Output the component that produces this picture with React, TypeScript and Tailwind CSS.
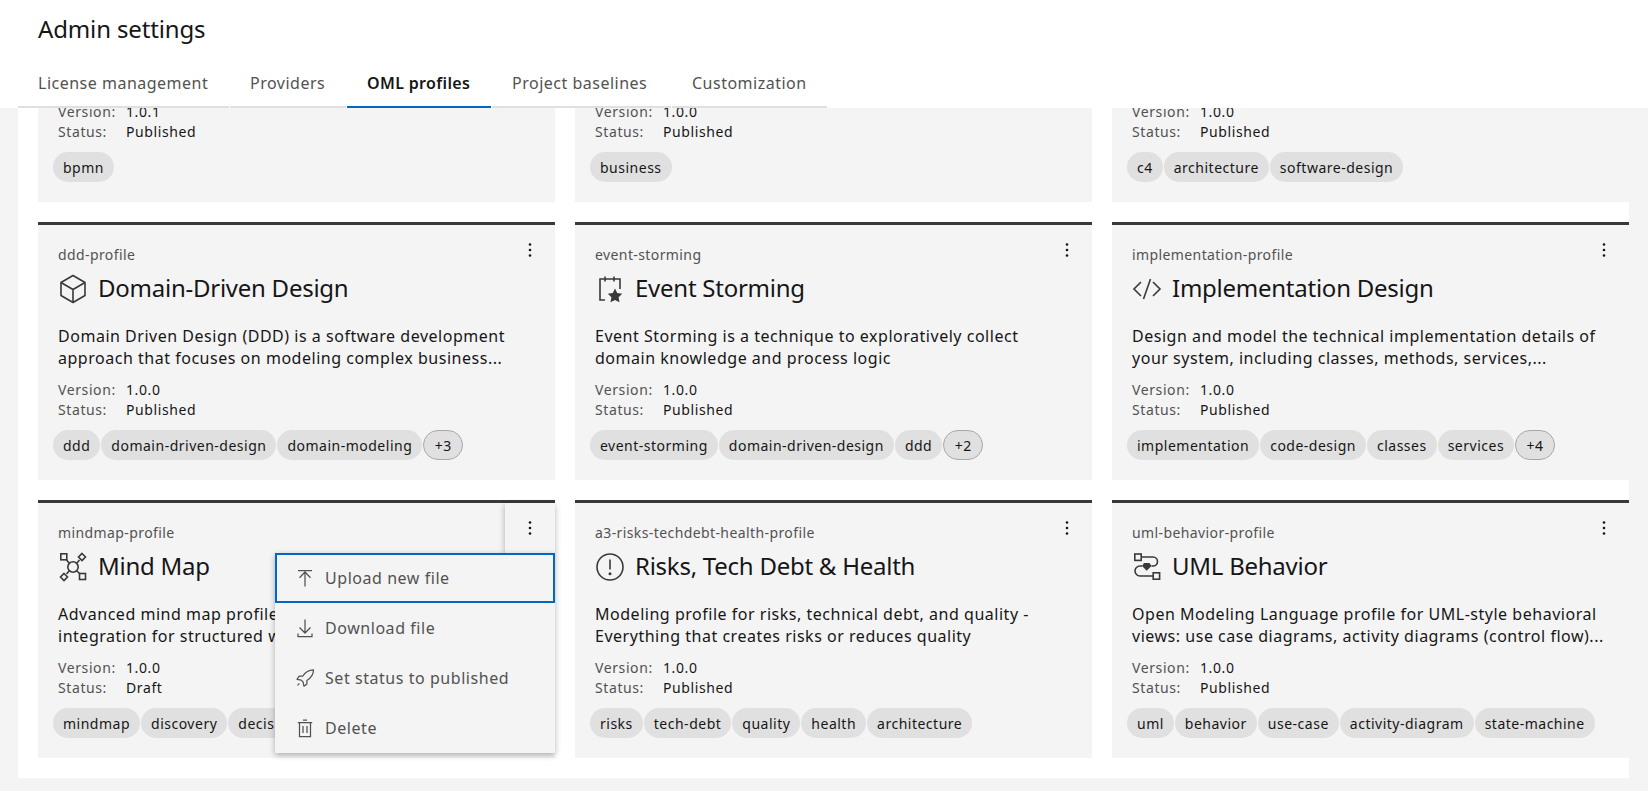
import type { ReactNode } from "react";

const FONT = "font-['Noto_Sans',sans-serif]";

function Glyph({ children, className = "" }: { children: ReactNode; className?: string }) {
  return (
    <svg viewBox="0 0 30 30" fill="none" stroke="#393939" strokeWidth={1.6} className={`w-[30px] h-[30px] shrink-0 mt-[2px] ${className}`}>
      {children}
    </svg>
  );
}

const CubeIcon = () => (
  <Glyph>
    <path d="M15 1.5 27 8.5V21.5L15 28.5 3 21.5V8.5Z" strokeLinejoin="round" />
    <path d="M3 8.5 15 15.5 27 8.5M15 15.5V28.5" />
  </Glyph>
);

const EventIcon = () => (
  <Glyph>
    <path d="M10 26H5V5H25V15" />
    <path d="M10 2.5V7.5M19 2.5V7.5" />
    <path d="M20 14.5l2.2 4.6 5 .7-3.6 3.5.9 5-4.5-2.4-4.5 2.4.9-5-3.6-3.5 5-.7Z" fill="#393939" stroke="none" />
  </Glyph>
);

const CodeIcon = () => (
  <Glyph>
    <path d="M9 8 2 15l7 7M21 8l7 7-7 7M18.5 5 11.5 25" />
  </Glyph>
);

const MindMapIcon = () => (
  <Glyph>
    <rect x="2.8" y="1.8" width="6" height="6" />
    <rect x="21.5" y="21.5" width="6" height="6" />
    <path d="M24 1.5 27.5 5 24 8.5 20.500 5Z" />
    <path d="M6 21.5 9.500 25 6 28.500 2.500 25Z" />
    <circle cx="15" cy="15" r="5.200" />
    <path d="M8.500 8 11.300 11.300M21.500 8 18.700 11.300M8.500 22 11.300 18.700M21.500 21.500 18.700 18.700" />
  </Glyph>
);

const AlertIcon = () => (
  <Glyph>
    <circle cx="15" cy="15" r="13" />
    <path d="M15 7.500V17.500" />
    <circle cx="15" cy="21.800" r="1.500" fill="#393939" stroke="none" />
  </Glyph>
);

const BehaviorIcon = () => (
  <Glyph>
    <rect x="2.800" y="2" width="6.400" height="6.400" />
    <rect x="21.200" y="20.800" width="6.400" height="6.400" />
    <path d="M9.500 5H21a4.500 4.500 0 0 1 0 9h-1.500M10 14H8a5 5 0 0 0 0 10H21" />
    <path d="M14.700 18.800 10 14l2-3h5.500l2 3Z" fill="#393939" stroke="none" />
  </Glyph>
);

function Kebab() {
  return (
    <svg viewBox="0 0 16 16" className="w-4 h-4" fill="#161616">
      <circle cx="8" cy="2.500" r="1.300" />
      <circle cx="8" cy="8" r="1.300" />
      <circle cx="8" cy="13.500" r="1.300" />
    </svg>
  );
}

function MenuGlyph({ children }: { children: ReactNode }) {
  return (
    <svg viewBox="0 0 20 20" fill="none" stroke="#525252" strokeWidth={1.250} className="w-5 h-5 shrink-0">
      {children}
    </svg>
  );
}

const menuItems: { label: string; focused?: boolean; icon: ReactNode }[] = [
  {
    label: "Upload new file",
    focused: true,
    icon: <path d="M3 2.500H17M10 18.500V4M4.500 9.800 10 4l5.500 5.800" />,
  },
  {
    label: "Download file",
    icon: <path d="M10 1.500V15M4.500 9.500 10 15l5.500-5.500M3 15.500V18.500H17V15.500" />,
  },
  {
    label: "Set status to published",
    icon: <path d="M18.500 1.800c-4.800 0-8.400 2.400-10.800 6.400H4.200L2 11.300l4.200.8 1.900 1.900.8 4.200 3-2.300v-3.400c3.900-2.400 6.600-5.900 6.600-10.700ZM4.300 15.400 2.500 17.400" strokeLinejoin="round" />,
  },
  {
    label: "Delete",
    icon: <path d="M8 2H12M2.800 4.500H17.200M4.500 4.500V18.500H15.500V4.500M8 8V15M12 8V15" />,
  },
];

function ActionsMenu() {
  return (
    <>
      <div className="absolute top-0 right-0 w-[50px] h-[50px] bg-[#f4f4f4] flex items-center justify-center shadow-[0_2px_6px_rgba(0,0,0,0.3)] z-10">
        <Kebab />
      </div>
      <div className="absolute top-[50px] right-0 w-[280px] bg-[#f4f4f4] shadow-[0_2px_6px_rgba(0,0,0,0.3)] z-20">
        {menuItems.map((item) => (
          <div
            key={item.label}
            className={`h-[50px] flex items-center gap-[10px] pl-5 text-[16px] tracking-[0.55px] text-[#525252] ${item.focused ? "outline-2 -outline-offset-2 outline-[#0067c5]" : ""}`}
          >
            <MenuGlyph>{item.icon}</MenuGlyph>
            {item.label}
          </div>
        ))}
      </div>
    </>
  );
}

function Meta({ version, status }: { version: string; status: string }) {
  return (
    <div className="pl-5 text-[14px] leading-5 tracking-[0.6px]">
      <div className="flex">
        <span className="w-[68px] text-[#525252]">Version:</span>
        <span className="text-[#161616]">{version}</span>
      </div>
      <div className="flex">
        <span className="w-[68px] text-[#525252]">Status:</span>
        <span className="text-[#161616]">{status}</span>
      </div>
    </div>
  );
}

function Tags({ tags, more }: { tags: string[]; more?: number }) {
  return (
    <div className="flex gap-px pl-[15px] mt-[10px] text-[14px] tracking-[0.5px] text-[#161616]">
      {tags.map((t) => (
        <span key={t} className="h-[30px] px-[10px] rounded-full bg-[#e0e0e0] flex items-center whitespace-nowrap">
          {t}
        </span>
      ))}
      {more ? (
        <span className="h-[30px] w-10 rounded-full bg-[#e0e0e0] border border-[#a8a8a8] flex items-center justify-center">
          +{more}
        </span>
      ) : null}
    </div>
  );
}

type Profile = {
  id: string;
  title: string;
  icon: ReactNode;
  desc: string[];
  status?: string;
  tags: string[];
  more?: number;
  open?: boolean;
};

function ProfileCard({ p }: { p: Profile }) {
  return (
    <div className="relative h-[258px] bg-[#f4f4f4] border-t-[3px] border-[#393939]">
      {p.open ? (
        <ActionsMenu />
      ) : (
        <div className="absolute top-0 right-0 w-[50px] h-[50px] flex items-center justify-center">
          <Kebab />
        </div>
      )}
      <div className="pl-5 pt-[21px] text-[14px] leading-[18px] tracking-[0.4px] text-[#525252]">{p.id}</div>
      <div className="flex items-center gap-[10px] pl-5 mt-[9px] h-[30px]">
        {p.icon}
        <span className="text-[24px] tracking-[-0.25px] text-[#161616] whitespace-nowrap">{p.title}</span>
      </div>
      <div className="pl-5 mt-[22px] text-[16px] leading-[22px] tracking-[0.52px] text-[#161616]">
        {p.desc.map((line) => (
          <div key={line} className="whitespace-nowrap">
            {line}
          </div>
        ))}
      </div>
      <div className="mt-[11px]">
        <Meta version="1.0.0" status={p.status ?? "Published"} />
      </div>
      <Tags tags={p.tags} more={p.more} />
    </div>
  );
}

const clippedRow = [
  { version: "1.0.1", tags: ["bpmn"] },
  { version: "1.0.0", tags: ["business"] },
  { version: "1.0.0", tags: ["c4", "architecture", "software-design"] },
];

const profiles: Profile[] = [
  {
    id: "ddd-profile",
    title: "Domain-Driven Design",
    icon: <CubeIcon />,
    desc: ["Domain Driven Design (DDD) is a software development", "approach that focuses on modeling complex business..."],
    tags: ["ddd", "domain-driven-design", "domain-modeling"],
    more: 3,
  },
  {
    id: "event-storming",
    title: "Event Storming",
    icon: <EventIcon />,
    desc: ["Event Storming is a technique to exploratively collect", "domain knowledge and process logic"],
    tags: ["event-storming", "domain-driven-design", "ddd"],
    more: 2,
  },
  {
    id: "implementation-profile",
    title: "Implementation Design",
    icon: <CodeIcon />,
    desc: ["Design and model the technical implementation details of", "your system, including classes, methods, services,..."],
    tags: ["implementation", "code-design", "classes", "services"],
    more: 4,
  },
  {
    id: "mindmap-profile",
    title: "Mind Map",
    icon: <MindMapIcon />,
    desc: ["Advanced mind map profile", "integration for structured w"],
    status: "Draft",
    tags: ["mindmap", "discovery", "decision-making"],
    open: true,
  },
  {
    id: "a3-risks-techdebt-health-profile",
    title: "Risks, Tech Debt & Health",
    icon: <AlertIcon />,
    desc: ["Modeling profile for risks, technical debt, and quality -", "Everything that creates risks or reduces quality"],
    tags: ["risks", "tech-debt", "quality", "health", "architecture"],
  },
  {
    id: "uml-behavior-profile",
    title: "UML Behavior",
    icon: <BehaviorIcon />,
    desc: ["Open Modeling Language profile for UML-style behavioral", "views: use case diagrams, activity diagrams (control flow)..."],
    tags: ["uml", "behavior", "use-case", "activity-diagram", "state-machine"],
  },
];

const tabs = [
  { label: "License management", width: "w-[211px]" },
  { label: "Providers", width: "w-[116px]" },
  { label: "OML profiles", width: "w-[144px]", active: true },
  { label: "Project baselines", width: "w-[179px]" },
  { label: "Customization", width: "w-[155px]" },
];

export default function App() {
  return (
    <div className={`h-screen overflow-hidden bg-[#f4f4f4] ${FONT}`}>
      <header className="h-[108px] bg-white">
        <h1 className="h-[60px] pl-[38px] pt-[12px] text-[24px] leading-[34px] tracking-[-0.15px] text-[#161616]">Admin settings</h1>
        <nav className="flex gap-px pl-[18px]">
          {tabs.map((t) => (
            <div
              key={t.label}
              className={`${t.width} h-[48px] pl-5 flex items-center border-b-2 text-[16px] whitespace-nowrap ${
                t.active
                  ? "border-[#0067c5] font-semibold tracking-[0.35px] text-[#161616]"
                  : "border-[#e0e0e0] tracking-[0.5px] text-[#525252]"
              }`}
            >
              {t.label}
            </div>
          ))}
        </nav>
      </header>

      <main className="ml-[18px] w-[1611px] h-[670px] bg-white pl-5 pb-5 flex flex-col justify-end overflow-hidden">
        <div className="grid grid-cols-[repeat(3,517px)] gap-5">
          {clippedRow.map((c) => (
            <div key={c.tags[0]} className="bg-[#f4f4f4] pb-5">
              <Meta version={c.version} status="Published" />
              <Tags tags={c.tags} />
            </div>
          ))}
          {profiles.map((p) => (
            <ProfileCard key={p.id} p={p} />
          ))}
        </div>
      </main>
    </div>
  );
}
